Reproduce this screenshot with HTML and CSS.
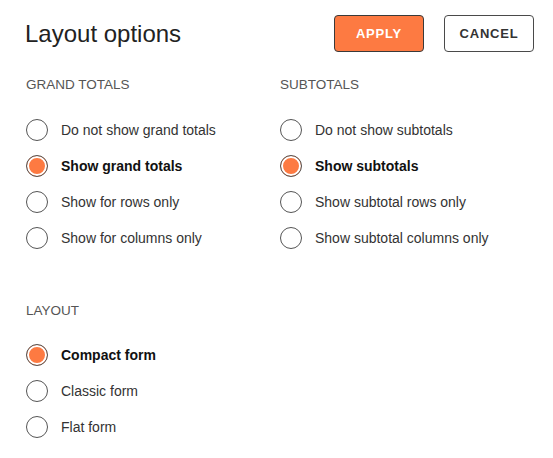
FILE: index.html
```html
<!DOCTYPE html>
<html lang="en">
<head>
<meta charset="utf-8">
<title>Layout options</title>
<link rel="stylesheet" href="styles.css">
</head>
<body>
<div class="dialog">
  <div class="header">
    <h1 class="title">Layout options</h1>
    <div class="actions">
      <button class="btn btn-apply">APPLY</button>
      <button class="btn btn-cancel">CANCEL</button>
    </div>
  </div>

  <div class="columns">
    <div class="group">
      <div class="group-title">GRAND TOTALS</div>
      <label class="option"><input type="radio" name="gt" class="radio"><span class="text">Do not show grand totals</span></label>
      <label class="option"><input type="radio" name="gt" class="radio" checked><span class="text">Show grand totals</span></label>
      <label class="option"><input type="radio" name="gt" class="radio"><span class="text">Show for rows only</span></label>
      <label class="option"><input type="radio" name="gt" class="radio"><span class="text">Show for columns only</span></label>
    </div>
    <div class="group">
      <div class="group-title">SUBTOTALS</div>
      <label class="option"><input type="radio" name="st" class="radio"><span class="text">Do not show subtotals</span></label>
      <label class="option"><input type="radio" name="st" class="radio" checked><span class="text">Show subtotals</span></label>
      <label class="option"><input type="radio" name="st" class="radio"><span class="text">Show subtotal rows only</span></label>
      <label class="option"><input type="radio" name="st" class="radio"><span class="text">Show subtotal columns only</span></label>
    </div>
  </div>

  <div class="group layout-group">
    <div class="group-title">LAYOUT</div>
    <label class="option"><input type="radio" name="lf" class="radio" checked><span class="text">Compact form</span></label>
    <label class="option"><input type="radio" name="lf" class="radio"><span class="text">Classic form</span></label>
    <label class="option"><input type="radio" name="lf" class="radio"><span class="text">Flat form</span></label>
  </div>
</div>
</body>
</html>
```

FILE: styles.css
```css
html, body {
  margin: 0;
  padding: 0;
  background: #fff;
}

body {
  font-family: "Liberation Sans", Arial, sans-serif;
  color: #333;
}

.dialog {
  padding: 15px 19px 0 26px;
}

.header {
  display: flex;
  justify-content: space-between;
  align-items: center;
  height: 37px;
}

.title {
  margin: 0 0 0 -1px;
  font-size: 24px;
  font-weight: normal;
  color: #222;
  line-height: 28px;
}

.actions {
  display: flex;
  gap: 20px;
}

.btn {
  width: 90px;
  height: 37px;
  border-radius: 4px;
  font-family: "Liberation Sans", Arial, sans-serif;
  font-size: 13px;
  font-weight: bold;
  letter-spacing: 0.8px;
  padding: 0;
  cursor: pointer;
}

.btn-apply {
  background: #fd7a42;
  color: #fff;
  border: 1px solid #3a3a3a;
}

.btn-cancel {
  background: #fff;
  color: #333;
  border: 1px solid #4a4a4a;
}

.columns {
  display: grid;
  grid-template-columns: 254px 1fr;
  margin-top: 25px;
}

.group {
  display: flex;
  flex-direction: column;
}

.group-title {
  font-size: 13.5px;
  line-height: 15px;
  color: #555;
  margin-bottom: 20px;
}

.layout-group {
  margin-top: 47px;
}

.layout-group .group-title {
  margin-bottom: 19px;
}

.option {
  display: flex;
  align-items: center;
  height: 36px;
  gap: 13px;
  cursor: pointer;
}

.radio {
  appearance: none;
  -webkit-appearance: none;
  margin: 0;
  width: 22px;
  height: 22px;
  border: 1px solid #555;
  border-radius: 50%;
  background: #fff;
  flex: none;
}

.radio:checked {
  background: #fd7a42;
  box-shadow: inset 0 0 0 2px #fff;
}

.text {
  font-size: 14px;
  color: #333;
}

.radio:checked + .text {
  font-weight: bold;
  color: #111;
}
```
